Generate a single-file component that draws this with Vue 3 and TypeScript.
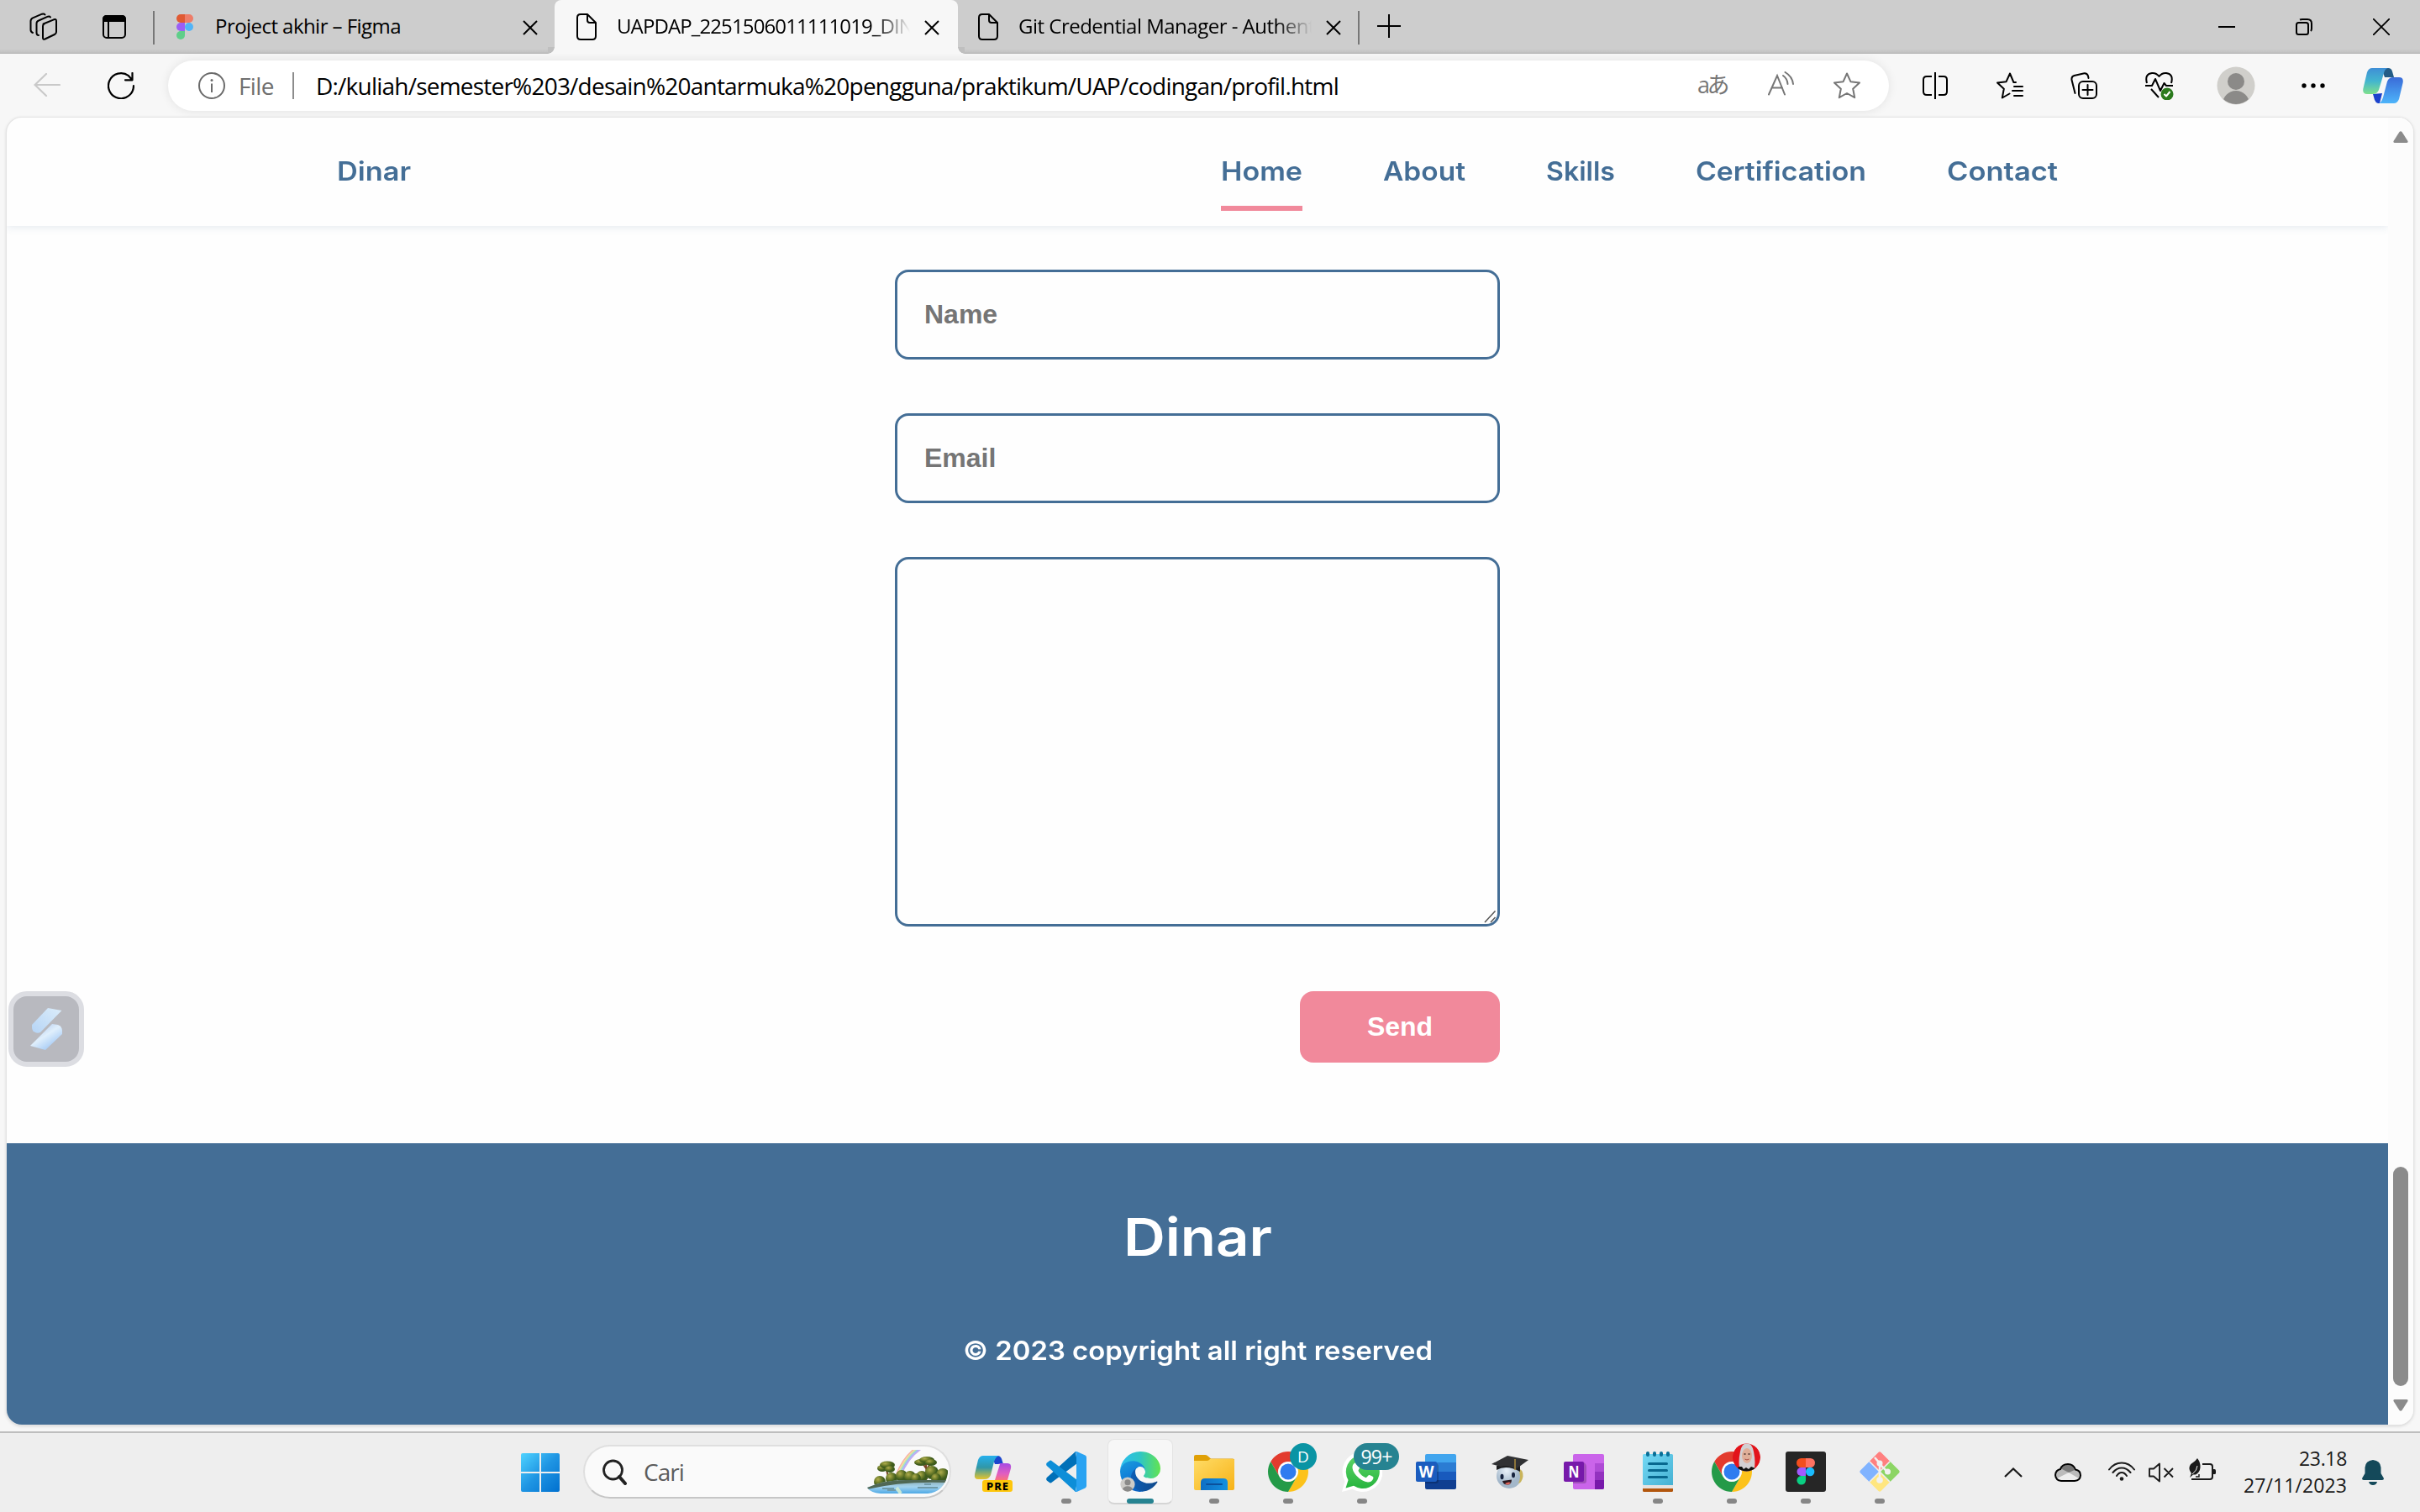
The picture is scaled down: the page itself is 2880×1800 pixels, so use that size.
<script setup lang="ts">
interface NavLink { label: string; width: number; active?: boolean }

const links: NavLink[] = [
  { label: 'Home', width: 97, active: true },
  { label: 'About', width: 98 },
  { label: 'Skills', width: 82 },
  { label: 'Certification', width: 203 },
  { label: 'Contact', width: 132 },
]

// Spreads the letters of an element so that its text fills the given width.
const vFit = {
  mounted(el: HTMLElement, binding: { value: number }) {
    const count = (el.textContent ?? '').trim().length
    const natural = el.getBoundingClientRect().width
    el.style.letterSpacing = `${(binding.value - natural) / count}px`
  },
}

// Widens the glyphs themselves, and lets the box keep the widened size in the flow.
const vStretch = {
  mounted(el: HTMLElement, binding: { value: number }) {
    const natural = el.getBoundingClientRect().width
    el.style.transformOrigin = 'left center'
    el.style.transform = `scaleX(${binding.value / natural})`
    el.style.marginRight = `${binding.value - natural}px`
  },
}
</script>

<template>
  <div class="desktop">
    <header class="tabs">
      <div class="tab-tools">
        <svg class="i-work" width="34" height="34" viewBox="0 0 34 34" fill="none" stroke="#000" stroke-width="2" stroke-linejoin="round" stroke-linecap="round">
          <path d="M16.500 13.500 29 8.300Q32 7.200 32 10V23Q32 25 30 26L18.500 31.500Q16 32.500 16 30V16Q16 14 18 13Z" />
          <path d="M11 27Q8.500 27 8.500 24V13Q8.500 10.500 11 9.500L22 4.700Q24 4 25 5.500" />
          <path d="M4 24Q1.500 23 1.500 20.500V10Q1.500 7.500 4 6.300L15 1.700Q17.500 1 18.500 2.500" />
        </svg>
        <svg class="i-vert" width="28" height="28" viewBox="0 0 28 28">
          <rect x="1" y="1" width="26" height="26" rx="4" fill="none" stroke="#000" stroke-width="2" />
          <path d="M0 8V5Q0 0 5 0H23Q28 0 28 5V8Z" /><path d="M7 8V27" stroke="#000" stroke-width="2" />
        </svg>
        <i class="bar"></i>
      </div>
      <div class="tab first">
        <svg class="fav" width="24" height="30" viewBox="-2 0 24 30">
          <path d="M5 0H10V10H5A5 5 0 0 1 5 0Z" fill="#e05a33" /><path d="M10 0H15A5 5 0 0 1 15 10H10Z" fill="#ee7d69" />
          <path d="M5 10H10V20H5A5 5 0 0 1 5 10Z" fill="#9b5ff5" /><circle cx="15" cy="15" r="5" fill="#52b4f7" />
          <path d="M5 20H10V25A5 5 0 1 1 5 20Z" fill="#5fce89" />
        </svg>
        <div class="title"><span v-fit="221">Project akhir – Figma</span></div>
        <svg class="x" width="18" height="18" viewBox="0 0 18 18"><path d="M1 1 17 17M17 1 1 17" stroke="#000" stroke-width="2" /></svg>
      </div>
      <div class="tab active">
        <svg width="24" height="32" viewBox="0 0 24 32" fill="none" stroke="#000" stroke-width="2" stroke-linejoin="round"><path d="M5 1H13L23 11V27Q23 31 19 31H5Q1 31 1 27V5Q1 1 5 1ZM13 1V8Q13 11 16 11H23" /></svg>
        <div class="title faded"><span v-fit="353">UAPDAP_2251506011111019_DIN</span></div>
        <svg class="x" width="18" height="18" viewBox="0 0 18 18"><path d="M1 1 17 17M17 1 1 17" stroke="#000" stroke-width="2" /></svg>
      </div>
      <div class="tab third">
        <svg width="24" height="32" viewBox="0 0 24 32" fill="none" stroke="#000" stroke-width="2" stroke-linejoin="round"><path d="M5 1H13L23 11V27Q23 31 19 31H5Q1 31 1 27V5Q1 1 5 1ZM13 1V8Q13 11 16 11H23" /></svg>
        <div class="title faded"><span v-fit="353">Git Credential Manager - Authent</span></div>
        <svg class="x" width="18" height="18" viewBox="0 0 18 18"><path d="M1 1 17 17M17 1 1 17" stroke="#000" stroke-width="2" /></svg>
      </div>
      <i class="bar"></i>
      <svg class="plus" width="28" height="28" viewBox="0 0 28 28"><path d="M14 0V28M0 14H28" stroke="#000" stroke-width="2" /></svg>
      <div class="win">
        <svg width="20" height="20" viewBox="0 0 20 20"><path d="M0 10H20" stroke="#000" stroke-width="2" /></svg>
        <svg width="20" height="20" viewBox="0 0 20 20" fill="none" stroke="#000" stroke-width="2"><rect x="1" y="5" width="14" height="14" rx="2.500" /><path d="M5 1.500Q6 1 8 1H14Q19 1 19 6V12Q19 14 18 15" /></svg>
        <svg width="20" height="20" viewBox="0 0 20 20"><path d="M0 0 20 20M20 0 0 20" stroke="#000" stroke-width="1.800" /></svg>
      </div>
    </header>

    <div class="toolbar">
      <svg class="back" width="32" height="28" viewBox="0 0 32 28" fill="none" stroke="#c9c9c9" stroke-width="2.200" stroke-linecap="round"><path d="M31 14H1.500M15 1 1.500 14 15 27" /></svg>
      <svg class="reload" width="32" height="32" viewBox="0 0 32 32" fill="none" stroke="#000" stroke-width="2.200" stroke-linecap="round" stroke-linejoin="round"><path d="M31 16A15 15 0 1 1 25 4.200L29 8.800M29.500 1V9.300H21" /></svg>
      <div class="address">
        <svg class="info" width="32" height="32" viewBox="0 0 32 32"><circle cx="16" cy="16" r="15" fill="none" stroke="#6b6b6b" stroke-width="2" /><path d="M16 13.500V24" stroke="#6b6b6b" stroke-width="2" /><circle cx="16" cy="9.500" r="1.500" fill="#6b6b6b" /></svg>
        <span class="file"><span v-fit="42">File</span></span>
        <i class="sep"></i>
        <span class="url"><span v-fit="1217">D:/kuliah/semester%203/desain%20antarmuka%20pengguna/praktikum/UAP/codingan/profil.html</span></span>
        <span class="translate"><span v-fit="35">aあ</span></span>
        <svg class="read" width="32" height="30" viewBox="0 0 32 30" fill="none" stroke="#767676" stroke-width="2" stroke-linecap="round"><path d="M1 27.500 11 5 20 27.500M4.500 19.500H17M18 5Q23 8.500 23.500 15M20.500 1Q29 6 30 15" /></svg>
        <svg class="star" width="32" height="32" viewBox="0 0 32 32" fill="none" stroke="#767676" stroke-width="2" stroke-linejoin="round"><path d="M16 1.500 20.400 11.200 31 12.500 23.200 19.700 25.200 30.200 16 25 6.800 30.200 8.800 19.700 1 12.500 11.600 11.200Z" /></svg>
      </div>
      <div class="actions">
        <svg width="32" height="32" viewBox="0 0 32 32" fill="none" stroke="#000" stroke-width="2"><path d="M12 5H6Q2 5 2 9V23Q2 27 6 27H12M20 5H26Q30 5 30 9V23Q30 27 26 27H20M16 0V32" /></svg>
        <svg width="32" height="32" viewBox="0 0 32 32" fill="none" stroke="#000" stroke-width="2" stroke-linejoin="round" stroke-linecap="round"><path d="M23 12H20.400L16 1.500 11.600 11.200 1 12.500 8.800 19.700 6.800 30.500 15.500 25.500M21 17H31M19 22H31M21 28H31" /></svg>
        <svg width="32" height="32" viewBox="0 0 32 32" fill="none" stroke="#000" stroke-width="2" stroke-linecap="round"><rect x="10" y="11" width="21" height="20" rx="5" fill="#f7f7f7" /><path d="M20.500 15V27M14.500 21H26.500M5.500 25 1.500 9Q1 5 4.500 4L16.500 1.200Q20 1 21 4.500L21.500 7" /></svg>
        <svg width="34" height="34" viewBox="0 0 34 34" fill="none" stroke="#000" stroke-width="2" stroke-linejoin="round"><path d="M2 14Q-1 3 8 2Q13 1.500 16.500 6Q20 1.500 25 2Q34 3 31 14M0 17H8L12 9 18 23 22.500 14 25 17H33M7 21 16 31" /><circle cx="26" cy="27" r="7.500" fill="#2b7a1d" stroke="none" /><path d="M22.500 27 25 29.500 29.500 24" stroke="#fff" /></svg>
        <svg class="avatar" width="46" height="46" viewBox="0 0 46 46"><defs><clipPath id="av"><circle cx="23" cy="23" r="22" /></clipPath></defs><circle cx="23" cy="23" r="22.500" fill="#d0cfcb" /><g clip-path="url(#av)" fill="#8b8a88"><circle cx="23" cy="18" r="10" /><circle cx="23" cy="45" r="16" /></g></svg>
        <svg class="dots" width="28" height="8" viewBox="0 0 28 8"><circle cx="3" cy="4" r="2.700" /><circle cx="14" cy="4" r="2.700" /><circle cx="25" cy="4" r="2.700" /></svg>
        <svg class="pilot" width="48" height="44" viewBox="0 0 48 44">
          <defs>
            <linearGradient id="p1" x1="0" y1="0" x2="0" y2="1"><stop offset="0" stop-color="#3f8fd6" /><stop offset=".5" stop-color="#43b5cf" /><stop offset="1" stop-color="#7fe08c" /></linearGradient>
            <linearGradient id="p2" x1="0" y1="0" x2="0" y2="1"><stop offset="0" stop-color="#3a6bd8" /><stop offset="1" stop-color="#4db4fa" /></linearGradient>
          </defs>
          <path d="M22 1H30Q34 1 35 5L37 12H26Z" fill="#245c86" /><path d="M12 32 23 31 20 43H18Q15 42 14 39Z" fill="#1c43cc" />
          <path d="M11 1H30Q26 2 25 7L19 27Q17 32 12 32H5Q-1 32 .5 25L5 6Q7 1 11 1Z" fill="url(#p1)" />
          <path d="M37 43H19Q22 42 24 36L29 17Q31 12 36 12H43Q49 12 47.500 19L43 38Q41 43 37 43Z" fill="url(#p2)" />
        </svg>
      </div>
    </div>

    <div class="viewport">
      <div class="page">
        <nav class="nav">
          <a class="brand"><span v-stretch="88">Dinar</span></a>
          <ul>
            <li v-for="l in links" :key="l.label" :class="{ on: l.active }"><span v-stretch="l.width">{{ l.label }}</span></li>
          </ul>
        </nav>
        <form class="form" @submit.prevent>
          <input type="text" placeholder="Name" />
          <input type="text" placeholder="Email" />
          <div class="area">
            <textarea></textarea>
            <svg class="grip" width="16" height="16" viewBox="0 0 16 16"><path d="M1 14 13.500 .5M8 14 13.500 8" stroke="#555" stroke-width="1.500" /></svg>
          </div>
          <button>Send</button>
        </form>
        <footer class="footer">
          <h2><span v-stretch="177">Dinar</span></h2>
          <p><span v-stretch="559">© 2023 copyright all right reserved</span></p>
        </footer>
      </div>
      <div class="scroll">
        <svg width="18" height="14" viewBox="0 0 18 14"><path d="M7.500 1Q9 -.5 10.500 1L17.500 12Q18 14 16 14H2Q0 14 .5 12Z" fill="#8b8b8b" /></svg>
        <i class="thumb"></i>
        <svg width="18" height="14" viewBox="0 0 18 14"><path d="M7.500 13Q9 14.500 10.500 13L17.500 2Q18 0 16 0H2Q0 0 .5 2Z" fill="#8b8b8b" /></svg>
      </div>
      <div class="widget">
        <svg width="78" height="78" viewBox="0 0 78 78">
          <defs>
            <linearGradient id="w1" x1="1" y1="0" x2="0" y2="1"><stop offset="0" stop-color="#dcedfa" /><stop offset="1" stop-color="#b5d4f6" /></linearGradient>
            <linearGradient id="w2" x1=".3" y1=".3" x2=".7" y2=".8"><stop offset="0" stop-color="#c9ddf6" /><stop offset=".35" stop-color="#e0effc" /><stop offset="1" stop-color="#aed0f6" /></linearGradient>
          </defs>
          <path d="M41 14 57.500 17 32 43Q30 44 27 43.500Q22 42 22 37V34Z" fill="url(#w1)" />
          <path d="M46 33 53 34Q58 36 58 41V45L38 64 20 59Z" fill="url(#w2)" />
        </svg>
      </div>
    </div>

    <div class="taskbar">
      <svg class="start" width="46" height="46" viewBox="0 0 46 46">
        <defs><linearGradient id="s1" x1="0" y1="0" x2="1" y2="1"><stop offset="0" stop-color="#4fd3ff" /><stop offset=".5" stop-color="#1f95e3" /><stop offset="1" stop-color="#0070cf" /></linearGradient></defs>
        <path d="M2 0H22V22H0V2Q0 0 2 0ZM24 0H44Q46 0 46 2V22H24ZM0 24H22V46H2Q0 46 0 44ZM24 24H46V44Q46 46 44 46H24Z" fill="url(#s1)" />
      </svg>
      <div class="search">
        <svg width="29" height="31" viewBox="0 0 29 31" fill="none" stroke="#222"><circle cx="12.500" cy="13" r="11" stroke-width="2.800" /><path d="M20 21 27 29" stroke-width="4" stroke-linecap="round" /></svg>
        <span class="cari"><span v-fit="48">Cari</span></span>
        <svg class="scene" width="96" height="52" viewBox="0 0 96 52">
          <defs>
            <linearGradient id="lk" x1="0" y1="0" x2="0" y2="1"><stop offset="0" stop-color="#8ba9ae" /><stop offset=".5" stop-color="#a3d3ee" /><stop offset="1" stop-color="#4ea9e6" /></linearGradient>
            <radialGradient id="bush" cx=".35" cy=".3"><stop offset="0" stop-color="#b0ad4d" /><stop offset=".6" stop-color="#6b7b29" /><stop offset="1" stop-color="#3e5b1d" /></radialGradient>
            <clipPath id="sc"><path d="M0 0H96V28Q92 50 72 52H16Q4 51 0 45Z" /></clipPath>
          </defs>
          <g clip-path="url(#sc)">
            <g fill="none" stroke-width="1.700"><path d="M34 31Q42 10 56 -1" stroke="#f6b0a8" /><path d="M35.500 31Q43.500 10 58 -1" stroke="#f8dc9b" /><path d="M37 31Q45 10 60 -1" stroke="#b5e8b0" /><path d="M38.500 31Q46.500 10 62 -1" stroke="#98bff5" /><path d="M40 31Q48 10 64 -1" stroke="#c3abf0" /></g>
            <path d="M22 20 25 32M70 17 71 35M66 16 70 22M76 15 71 23" stroke="#7a4526" stroke-width="2" fill="none" />
            <g fill="url(#bush)"><ellipse cx="18" cy="22" rx="6" ry="4" /><ellipse cx="24" cy="18" rx="9" ry="4.500" /><ellipse cx="27" cy="23" rx="6" ry="4" /><ellipse cx="64" cy="15" rx="8" ry="4" /><ellipse cx="71" cy="12" rx="9" ry="4" /><ellipse cx="76" cy="15" rx="7" ry="4" />
              <circle cx="15" cy="38" r="7" /><circle cx="29" cy="34" r="7" /><circle cx="41" cy="31" r="7" /><circle cx="51" cy="32" r="7" /><circle cx="65" cy="32" r="7" /><circle cx="77" cy="27" r="8" /><circle cx="90" cy="30" r="8" /><circle cx="58" cy="34" r="6" /><circle cx="82" cy="34" r="6" /></g>
            <path d="M0 45Q20 36 46 36H96V52H0Z" fill="url(#lk)" /><path d="M0 45Q20 36 46 36H96V39Q40 37 0 47Z" fill="#506854" />
            <path d="M18 46H32M60 45H84M68 41H76M24 48H34" stroke="#6f9aa8" stroke-width="2" /><path d="M35 45 40 52" stroke="#cbe9d5" stroke-width="4" />
          </g>
        </svg>
      </div>

      <div class="apps">
        <div class="app">
          <svg width="48" height="48" viewBox="0 0 48 48">
            <defs>
              <linearGradient id="c1" x1="0" y1="0" x2="0" y2="1"><stop offset="0" stop-color="#25b0ee" /><stop offset=".5" stop-color="#3097a8" /><stop offset="1" stop-color="#e7c52c" /></linearGradient>
              <linearGradient id="c2" x1="0" y1="0" x2="0" y2="1"><stop offset="0" stop-color="#a64be3" /><stop offset=".6" stop-color="#e15ec0" /><stop offset="1" stop-color="#ff7471" /></linearGradient>
            </defs>
            <path d="M22 5H30Q34 6 35 12L36 15H26Z" fill="#1b46cd" />
            <path d="M12 5H31Q27 6 25 12L21 28Q19 33 14 33H6Q1 33 2 27L6 10Q8 5 12 5Z" fill="url(#c1)" />
            <path d="M22 35 27 19Q29 14 33 14H41Q46 14 45 20L41 34Z" fill="url(#c2)" /><path d="M27 15H32L26 34H18Q21 33 22 29Z" fill="#f1edf0" />
            <rect x="11" y="34" width="36" height="14" rx="3" fill="#fec60b" />
            <text x="29" y="45.500" text-anchor="middle" font-family="Noto Sans, sans-serif" font-size="13" font-weight="800" textLength="26">PRE</text>
          </svg>
        </div>
        <div class="app">
          <svg width="48" height="48" viewBox="0 0 48 48">
            <path d="M35 0 .8 31Q-.5 33 .8 34.500L4 37Q5.500 38 7 36.500L37 14Z" fill="#0070b8" />
            <path d="M35 48 .8 17Q-.5 15 .8 13.500L4 11Q5.500 10 7 11.500L37 34Z" fill="#0d8ed8" />
            <path d="M34 1Q35 -.5 37 .3L46.500 4.600Q48 5.500 48 7V41Q48 42.500 46.500 43.400L37 47.700Q35 48.500 34 47Q36 47.500 36 44.500V3.500Q36 .5 34 1Z" fill="#29a3f2" />
          </svg><i class="run"></i>
        </div>
        <div class="app">
          <div class="tile">
            <svg width="48" height="48" viewBox="0 0 256 256">
              <defs>
                <linearGradient id="e1" x1="0" x2="1"><stop offset="0" stop-color="#0c5fb8" /><stop offset="1" stop-color="#114a8b" /></linearGradient>
                <linearGradient id="e2" x1="0" y1="0" x2=".4" y2="1"><stop offset="0" stop-color="#1ca0dd" /><stop offset=".5" stop-color="#1283d9" /><stop offset="1" stop-color="#0b63c4" /></linearGradient>
                <linearGradient id="e3" x1="0" x2="1"><stop offset="0" stop-color="#2bbdf2" /><stop offset=".5" stop-color="#2fc6c4" /><stop offset="1" stop-color="#63e44f" /></linearGradient>
              </defs>
              <g transform="translate(-4.600 -4.900)">
                <path fill="url(#e1)" d="M235.680 195.460a93.730 93.730 0 0 1-10.540 4.710 101.870 101.870 0 0 1-35.900 6.460c-47.320 0-88.540-32.550-88.540-74.320A31.480 31.480 0 0 1 117.130 105c-42.800 1.800-53.800 46.400-53.800 72.530 0 73.880 68.090 81.370 82.760 81.370 7.910 0 19.840-2.300 27-4.560l1.310-.44a128.340 128.340 0 0 0 66.600-52.800 4 4 0 0 0-5.320-5.640z" />
                <path fill="url(#e2)" d="M110.340 246.340A79.200 79.200 0 0 1 87.600 225a80.720 80.720 0 0 1 29.530-120c3.120-1.470 8.450-4.130 15.540-4a32.350 32.350 0 0 1 25.690 13 31.880 31.880 0 0 1 6.360 18.660c0-.21 24.460-79.600-80-79.600-43.900 0-80 41.660-80 78.210a130.150 130.150 0 0 0 12.110 56 128 128 0 0 0 156.380 67.110 75.550 75.550 0 0 1-62.780-8z" />
                <path fill="url(#e3)" d="M156.940 153.780c-.81 1.050-3.300 2.500-3.300 5.660 0 2.610 1.700 5.120 4.720 7.230 14.380 10 41.490 8.680 41.560 8.680A59.560 59.560 0 0 0 230.190 167a61.380 61.380 0 0 0 30.430-52.880c.26-22.410-8-37.310-11.340-43.910C228.080 28.760 182.350 4.920 132.610 4.920a128 128 0 0 0-128 126.200c.48-36.540 36.800-66.050 80-66.050 3.500 0 23.460.34 42 10.070 16.340 8.580 24.900 18.940 30.850 29.210 6.180 10.670 7.280 24.150 7.280 29.520s-2.740 13.330-7.800 19.910z" />
              </g>
              <circle cx="48" cy="208" r="46" fill="#cdcbc7" /><circle cx="48" cy="196" r="19" fill="#8b8a88" /><path d="M16 240Q24 220 48 220T80 240Q64 254 48 254T16 240Z" fill="#8b8a88" />
            </svg>
          </div><i class="run wide"></i>
        </div>
        <div class="app">
          <svg width="48" height="48" viewBox="0 0 48 48">
            <defs><linearGradient id="f1" x1="0" y1="0" x2="1" y2="1"><stop offset="0" stop-color="#ffdc66" /><stop offset="1" stop-color="#f7b217" /></linearGradient><linearGradient id="f2" x1="0" x2="1"><stop offset="0" stop-color="#0d6fc4" /><stop offset="1" stop-color="#1490e0" /></linearGradient></defs>
            <path d="M0 14V6Q0 4 2 4H13Q15 4 16 5L20 8.500H46Q48 8.500 48 10V14Z" fill="#e0a006" /><path d="M0 11H15Q17 11 18 10L19 9H47Q48 9 48 10.500V44Q48 46 46 46H2Q0 46 0 44Z" fill="url(#f1)" />
            <path d="M8 46V37Q8 32 13 32H35Q40 32 40 37V46Z" fill="url(#f2)" /><path d="M15 39H33" stroke="#0b509b" stroke-width="2" stroke-linecap="round" />
          </svg><i class="run"></i>
        </div>
        <div class="app">
          <svg width="48" height="48" viewBox="0 0 48 48"><path d="M3.220 12A24 24 0 0 1 44.780 12H24A12 12 0 0 0 13.600 30Z" fill="#e33b2e" /><path d="M44.780 12A24 24 0 0 1 24 48L34.400 30A12 12 0 0 0 24 12Z" fill="#fcc21b" /><path d="M24 48A24 24 0 0 1 3.220 12L13.600 30A12 12 0 0 0 34.400 30Z" fill="#249a48" /><circle cx="24" cy="24" r="11.500" fill="#fff" /><circle cx="24" cy="24" r="9.500" fill="#2f7cf0" /></svg>
          <span class="badge letter">D</span><i class="run"></i>
        </div>
        <div class="app">
          <svg width="48" height="48" viewBox="0 0 48 48">
            <defs><linearGradient id="wa" x1="0" y1="0" x2="0" y2="1"><stop offset="0" stop-color="#5fd669" /><stop offset="1" stop-color="#27b43e" /></linearGradient></defs>
            <path d="M0 48 3.500 35.500A24 24 0 1 1 12.500 44.700Z" fill="#fff" /><path d="M4.500 43.500 7.500 34A20 20 0 1 1 14 40.800Z" fill="url(#wa)" />
            <path d="M17 13Q18 12.500 19 14L21 18.500Q21.500 19.500 20 21.500Q19 22.500 20 24Q23 29 28 31Q29 31.500 30 30L32 28Q33 27.500 37 30Q38 31 37 33Q35 36.500 31 36.500Q24 36 17 28.500Q12 22.500 12.500 18Q13 14 17 13Z" fill="#fff" />
          </svg><span class="badge count"><span v-fit="37">99+</span></span><i class="run"></i>
        </div>
        <div class="app">
          <svg width="48" height="48" viewBox="0 0 48 48"><path d="M13 3H46Q48 3 48 5V13H11V5Q11 3 13 3Z" fill="#41a5ee" /><path d="M11 13H48V24H11Z" fill="#2b7cd3" /><path d="M11 24H48V34H11Z" fill="#185abd" /><path d="M11 34H48V43Q48 45 46 45H13Q11 45 11 43Z" fill="#103f91" /><path d="M11 12H22Q27 14 27 18V35Q27 38 24 38H11Z" fill="#000" opacity=".2" /><rect y="12" width="25" height="24" rx="2" fill="#1b5cbe" /><text x="12.500" y="31" text-anchor="middle" font-family="Open Sans, sans-serif" font-size="19" font-weight="700" fill="#fff" textLength="18" lengthAdjust="spacingAndGlyphs">W</text></svg>
        </div>
        <div class="app">
          <svg width="48" height="48" viewBox="0 0 48 48">
            <defs><radialGradient id="rb" cx=".4" cy=".3"><stop offset="0" stop-color="#e9f1f9" /><stop offset="1" stop-color="#a3b7ca" /></radialGradient></defs>
            <circle cx="23" cy="29" r="15" fill="url(#rb)" /><path d="M34 21Q40 21 39.500 30Q38 37 34 38Q38 30 34 21Z" fill="#c9b45b" />
            <ellipse cx="14.500" cy="30" rx="2" ry="3.300" fill="#16233e" /><ellipse cx="28" cy="28" rx="2" ry="3.300" fill="#16233e" /><path d="M15 35 26 33.500Q26 39.500 21 39.500Q16 39.500 15 35Z" fill="#2a1b22" /><path d="M18 38Q22 35.500 25 37Q23 40 20 39.500Z" fill="#dd6259" />
            <path d="M8 17V22Q20 15 36 24V15L22 11Z" fill="#1c1d1f" /><path d="M2 15 21 5 46 10 31 21Q20 15 13 18Z" fill="#303133" /><path d="M30 9V22" stroke="#aa8b3e" stroke-width="1.500" />
          </svg>
        </div>
        <div class="app">
          <svg width="48" height="48" viewBox="0 0 48 48"><rect x="11" y="3" width="37" height="42" rx="2" fill="#ca64ea" /><path d="M37 14H48V24H37Z" fill="#ae4bd5" /><path d="M37 24H48V34H37Z" fill="#9332bf" /><path d="M37 34H48V43Q48 45 46 45H37Z" fill="#7719aa" /><path d="M11 12H22Q27 14 27 18V35Q27 38 24 38H11Z" fill="#000" opacity=".2" /><rect y="12" width="24" height="24" rx="2" fill="#7719aa" /><text x="12" y="31" text-anchor="middle" font-family="Open Sans, sans-serif" font-size="19" font-weight="700" fill="#fff" textLength="13" lengthAdjust="spacingAndGlyphs">N</text></svg>
        </div>
        <div class="app">
          <svg width="48" height="48" viewBox="0 0 48 48">
            <defs><linearGradient id="np" x1="0" y1="0" x2="1" y2="1"><stop offset="0" stop-color="#75d9f5" /><stop offset="1" stop-color="#45b1d3" /></linearGradient></defs>
            <path d="M6 44H42V46.500Q42 48 40.500 48H7.500Q6 48 6 46.500Z" fill="#b2560d" /><path d="M6 38H42V44H6Z" fill="#e6e3e1" /><path d="M7.500 3H40.500Q42 3 42 4.500V40H7.500Q6 40 6 38.500V4.500Q6 3 7.500 3Z" fill="url(#np)" />
            <path d="M12 2V4M20 2V4M28 2V4M36 2V4" stroke="#0a6f97" stroke-width="4" stroke-linecap="round" /><path d="M13.500 14.500H34.500M13.500 22.500H34.500M13.500 30.500H34.500" stroke="#08688f" stroke-width="3" stroke-linecap="round" />
          </svg><i class="run"></i>
        </div>
        <div class="app">
          <svg width="48" height="48" viewBox="0 0 48 48"><path d="M3.220 12A24 24 0 0 1 44.780 12H24A12 12 0 0 0 13.600 30Z" fill="#e33b2e" /><path d="M44.780 12A24 24 0 0 1 24 48L34.400 30A12 12 0 0 0 24 12Z" fill="#fcc21b" /><path d="M24 48A24 24 0 0 1 3.220 12L13.600 30A12 12 0 0 0 34.400 30Z" fill="#249a48" /><circle cx="24" cy="24" r="11.500" fill="#fff" /><circle cx="24" cy="24" r="9.500" fill="#2f7cf0" /></svg>
          <svg class="badge face" width="33" height="34" viewBox="0 0 33 34"><defs><clipPath id="fc"><circle cx="16.500" cy="17" r="16.500" /></clipPath></defs><g clip-path="url(#fc)"><path d="M0 0H33V34H0Z" fill="#e3131a" /><path d="M9 34Q6 24 9 10Q11 0 17 0T25 10Q28 24 25 34Z" fill="#d2cfd2" /><ellipse cx="17" cy="15" rx="6" ry="9" fill="#dfae98" /><path d="M13.500 13H15.500M18.500 13H20.500" stroke="#432d28" stroke-width="1.500" /><path d="M14.500 19Q17 21 19.500 19" stroke="#a84b45" fill="none" /><path d="M4 34 7 28H11L13 31 16 29 19 31 22 28 27 30 29 34Z" fill="#111" /></g></svg><i class="run"></i>
        </div>
        <div class="app">
          <svg width="48" height="48" viewBox="0 0 48 48"><rect width="48" height="48" rx="3" fill="#262626" /><path d="M18.500 8H24V19H18.500A5.500 5.500 0 0 1 18.500 8Z" fill="#f24e1e" /><path d="M24 8H29.500A5.500 5.500 0 0 1 29.500 19H24Z" fill="#ff7262" /><path d="M18.500 19H24V29H18.500A5 5 0 0 1 18.500 19Z" fill="#a259ff" /><circle cx="29.200" cy="24" r="5.200" fill="#1abcfe" /><path d="M18.500 29H24V34.500A5.300 5.300 0 1 1 18.500 29Z" fill="#0acf83" /></svg><i class="run"></i>
        </div>
        <div class="app">
          <svg width="48" height="48" viewBox="0 0 48 48">
            <path d="M22.500 1Q24 -.3 25.500 1L36 11.500 24 23.500 12 11.500Z" fill="#ff8080" /><path d="M47 22.500Q48.300 24 47 25.500L36.500 36 24.500 24 36.500 12Z" fill="#8cd564" /><path d="M1 22.500Q-.3 24 1 25.500L11.500 36 23.500 24 11.500 12Z" fill="#80b3ff" /><path d="M22.500 47Q24 48.300 25.500 47L36 36.500 24 24.500 12 36.500Z" fill="#ffe680" />
            <path d="M18 7 24 14V34M24 15 33 24" stroke="#f1f1f1" stroke-width="2.500" fill="none" /><path d="M12 12 24 24 36 36M36 12 12 36" stroke="#eee" stroke-width="1.500" /><g fill="#f1f1f1"><circle cx="24" cy="14" r="3.500" /><circle cx="33.500" cy="24" r="3.500" /><circle cx="24" cy="34" r="3.800" /></g>
          </svg><i class="run"></i>
        </div>
      </div>

      <div class="tray">
        <svg class="t-up" width="22" height="12" viewBox="0 0 22 12" fill="none" stroke="#1a1a1a" stroke-width="2.200"><path d="M1 11 11 1.500 21 11" /></svg>
        <svg class="t-cloud" width="32" height="22" viewBox="0 0 32 22"><path d="M7 7Q9 1 16 1Q22.500 1 25 7.500Q31 8.500 31 14.500Q30.500 20.500 24 21H8Q1.500 20.500 1 14Q1.500 8 7 7Z" fill="#bbb" /><path d="M8 6.500Q10 1.500 16 1.500T24 8L17 11Z" fill="#777" /><path d="M3 18 17 11 29 18 25 20.500H8Z" fill="#eee" /><path d="M7 7Q9 1 16 1Q22.500 1 25 7.500Q31 8.500 31 14.500Q30.500 20.500 24 21H8Q1.500 20.500 1 14Q1.500 8 7 7Z" fill="none" stroke="#000" stroke-width="2" /></svg>
        <svg class="t-wifi" width="32" height="24" viewBox="0 0 32 24" fill="none" stroke="#1a1a1a" stroke-width="2" stroke-linecap="round"><path d="M1 9.500Q7 1.500 16 1.500T31 9.500M5.500 13Q10 7.500 16 7.500T26.500 13M10 17Q12.500 13 16 13T22 17" /><circle cx="16" cy="20.500" r="2.300" fill="#1a1a1a" stroke="none" /></svg>
        <svg class="t-vol" width="30" height="24" viewBox="0 0 30 24" fill="none" stroke="#1a1a1a" stroke-width="1.900" stroke-linejoin="round"><path d="M1 7.500H6L13 1.500V22.500L6 16.500H1ZM18.500 7 29 17.500M29 7 18.500 17.500" /></svg>
        <svg class="t-bat" width="33" height="28" viewBox="0 0 33 28" fill="none" stroke="#1a1a1a" stroke-width="2"><path d="M16 8H25Q28 8 28 11V23Q28 26 25 26H3" /><path d="M29 14H30.500Q32 14 32 16V18.500Q32 20 30.500 20H29Z" fill="#1a1a1a" stroke="none" /><path d="M10 1Q14 6 13.500 12Q13 18 8 20.500H5L1 24 3 19Q0 15 .5 12Q1 8 5 6Q8 4 10 1Z" fill="#1a1a1a" stroke="none" /><path d="M10 10Q10 15 4 20" stroke="#eee" stroke-width="1" /><path d="M12 20V23H8" stroke-width="1.500" /></svg>
        <div class="clock"><span><b v-fit="57">23.18</b></span><span><b v-fit="123">27/11/2023</b></span></div>
        <svg class="t-bell" width="26" height="30" viewBox="0 0 26 30"><path d="M13 0Q22 1 22.500 9V16L26 22Q26 24 24 24H2Q0 24 0 22L3.500 16V9Q4 1 13 0ZM8 26H18Q17 30 13 30T8 26Z" fill="#14495a" /></svg>
      </div>
    </div>
  </div>
</template>

<style>
html, body { margin: 0; overflow: hidden; }
</style>

<style scoped>
* { box-sizing: border-box; }
svg { display: block; flex: none; }
.desktop { width: 2880px; height: 1800px; display: flex; flex-direction: column; background: #f7f7f7; font-family: "Open Sans", "Noto Sans", "Noto Sans CJK JP", sans-serif; color: #000; overflow: hidden; }
.desktop span > span, .clock b { display: inline-block; white-space: nowrap; }

.tabs { height: 64px; flex: none; display: flex; align-items: center; background: linear-gradient(#cdcdcd 58px, #c4c4c4 62px, #b4b4b4 64px); }
.tab-tools { width: 184px; display: flex; align-items: center; padding-left: 35px; }
.i-vert { margin-left: 53px; }
.bar { width: 2px; height: 40px; background: #777; flex: none; margin-top: 1px; }
.tab-tools .bar { margin-left: auto; }
.tab { height: 64px; display: flex; align-items: center; flex: none; position: relative; }
.first { width: 476px; padding: 0 20px 0 24px; }
.active { width: 480px; padding: 0 22px 0 26px; background: #f7f7f7; border-radius: 8px 8px 0 0; }
.third { width: 476px; padding: 0 20px 0 24px; }
.active::before, .active::after { content: ""; position: absolute; bottom: 0; width: 8px; height: 8px; }
.active::before { left: -8px; background: radial-gradient(circle at 0 0, #bfbfbf 7.500px, #f7f7f7 8px); }
.active::after { right: -8px; background: radial-gradient(circle at 100% 0, #bfbfbf 7.500px, #f7f7f7 8px); }
.title { margin-left: 24px; width: 349px; font-size: 24px; line-height: 40px; height: 40px; margin-top: -2px; overflow: hidden; white-space: nowrap; }
.title span { display: inline-block; white-space: nowrap; }
.active .title { margin-left: 24px; }
.faded { -webkit-mask-image: linear-gradient(90deg, #000 88%, transparent 100%); mask-image: linear-gradient(90deg, #000 88%, transparent 100%); }
.x { margin-left: auto; margin-top: 2px; }
.plus { margin-left: 21px; margin-top: -2px; }
.win { margin-left: auto; display: flex; gap: 72px; padding-right: 36px; }

.toolbar { height: 76px; flex: none; display: flex; align-items: center; padding-left: 40px; background: #f7f7f7; }
.back { margin-top: -2px; }
.reload { margin-left: 56px; }
.address { margin-left: 40px; width: 2048px; height: 60px; border-radius: 30px; background: #fff; display: flex; align-items: center; padding-left: 36px; box-shadow: 0 0 12px rgba(0,0,0,.09); flex: none; }
.file { margin-left: 16px; width: 64px; font-size: 28px; line-height: 60px; color: #6f6f6f; margin-top: -1px; }
.sep { width: 2px; height: 32px; background: #8c8c8c; }
.url { margin-left: 26px; width: 1644px; font-size: 28px; line-height: 60px; white-space: nowrap; margin-top: -1px; }
.translate { width: 84px; font-size: 27px; line-height: 56px; color: #767676; white-space: nowrap; font-family: "Open Sans", "Noto Sans CJK JP", sans-serif; margin-top: -2px; }
.read { margin-top: -4px; }
.star { margin-left: 46px; }
.actions { display: flex; align-items: center; margin-left: 39px; }
.actions svg + svg { margin-left: 56.500px; }
.actions svg.avatar { margin-left: 51px; }
.actions svg.dots { margin-left: 55px; }
.actions svg.pilot { margin-left: 45px; }

.viewport { height: 1556px; flex: none; margin: 0 8px; display: flex; position: relative; background: #fefefe; border-radius: 18px; overflow: hidden; box-shadow: 0 0 0 1px #e4e4e4, 0 1px 4px rgba(0,0,0,.2); }
.page { width: 2834px; display: flex; flex-direction: column; }
.nav { height: 129px; display: flex; align-items: flex-start; padding: 39px 393px 0 393px; justify-content: space-between; font: 600 31px/50px Inter, sans-serif; color: #446e96; box-shadow: 0 2px 9px rgba(68,110,150,.13); flex: none; }
.nav ul { list-style: none; margin: 0; padding: 0; display: flex; gap: 96px; }
.nav span { display: inline-block; white-space: nowrap; }
.nav li { height: 72px; }
.nav li.on { border-bottom: 6px solid #f1899b; }
.form { width: 720px; margin: 52px 0 0 1057px; display: flex; flex-direction: column; flex: none; height: 1040px; }
.form input { height: 107px; margin: 0 0 64px; border: 3px solid #446e96; border-radius: 16px; padding: 0 32px; font: bold 32px "Liberation Sans", sans-serif; background: #fefefe; flex: none; }
.form input::placeholder { color: #757575; opacity: 1; }
.area { position: relative; height: 440px; flex: none; }
.area textarea { display: block; width: 100%; height: 100%; resize: none; border: 3px solid #446e96; border-radius: 16px; background: #fefefe; margin: 0; }
.grip { position: absolute; right: 3px; bottom: 3px; }
.form button { align-self: flex-end; margin-top: 77px; width: 238px; height: 85px; border: 0; border-radius: 16px; background: #f1899b; color: #fff; font: bold 32px "Liberation Sans", sans-serif; flex: none; }
.footer { flex: 1; background: #446e96; color: #fff; display: flex; flex-direction: column; align-items: center; font-family: Inter, sans-serif; font-weight: 600; }
.footer h2 { margin: 72px 0 0; font-size: 62px; line-height: 80px; font-weight: 600; }
.footer p { margin: 70px 0 0; font-size: 31px; line-height: 50px; }
.footer span { display: inline-block; white-space: nowrap; }
.scroll { width: 30px; background: #fcfcfc; display: flex; flex-direction: column; align-items: center; padding: 16px 0; }
.thumb { width: 18px; height: 261px; border-radius: 9px; background: #8b8b8b; margin: auto 0 16px; }
.widget { position: absolute; left: 2px; top: 1040px; width: 90px; height: 90px; border: 6px solid #dcdde2; border-radius: 22px; background: #b8b9bf; }

.taskbar { margin-top: 8px; height: 96px; flex: none; border-top: 2px solid #bebebe; background: #eee; display: flex; align-items: center; padding-left: 620px; }
.start { flex: none; }
.search { margin-left: 28px; width: 438px; height: 64px; border-radius: 32px; border: 2px solid #dfdfdf; border-bottom-color: #c6c6c6; background: #fafafa; display: flex; align-items: center; padding-left: 21px; flex: none; margin-top: -2px; }
.cari { margin-left: 20px; width: 266px; font-size: 28px; line-height: 56px; color: #5c5c5c; }
.apps { margin-left: 5px; display: flex; flex: none; }
.app { width: 88px; height: 94px; position: relative; display: flex; align-items: center; justify-content: center; padding-bottom: 2px; }
.tile { width: 78px; height: 78px; border-radius: 8px; border: 1px solid #e4e4e4; border-bottom: 2px solid #d5d5d5; background: #f7f7f7; display: flex; align-items: center; justify-content: center; flex: none; }
.app:first-child { padding-left: 2px; }
.run { position: absolute; bottom: 10px; left: 38px; width: 12px; height: 6px; border-radius: 3px; background: #868686; }
.run.wide { left: 28px; width: 32px; background: #268391; }
.badge { position: absolute; left: 46px; top: 12px; height: 32px; border-radius: 16px; background: #268391; color: #fff; text-align: center; }
.letter { width: 32px; background: #0a94a4; font-size: 19px; line-height: 32px; }
.count { left: 34px; width: 54px; font-size: 23px; line-height: 32px; }
.face { height: 34px; left: 45px; background: none; }
.tray { margin-left: auto; display: flex; align-items: center; padding-right: 43px; flex: none; }
.t-cloud { margin-left: 38px; }
.t-wifi { margin-left: 32px; margin-top: -2px; }
.t-vol { margin-left: 16px; margin-top: -1px; }
.t-bat { margin-left: 18px; margin-top: -8px; }
.clock { width: 155px; display: flex; flex-direction: column; align-items: flex-end; font-size: 23px; line-height: 32px; color: #1a1a1a; margin-top: -3px; }
.clock b { font-weight: 400; }
.t-bell { margin-left: 18px; }
</style>
